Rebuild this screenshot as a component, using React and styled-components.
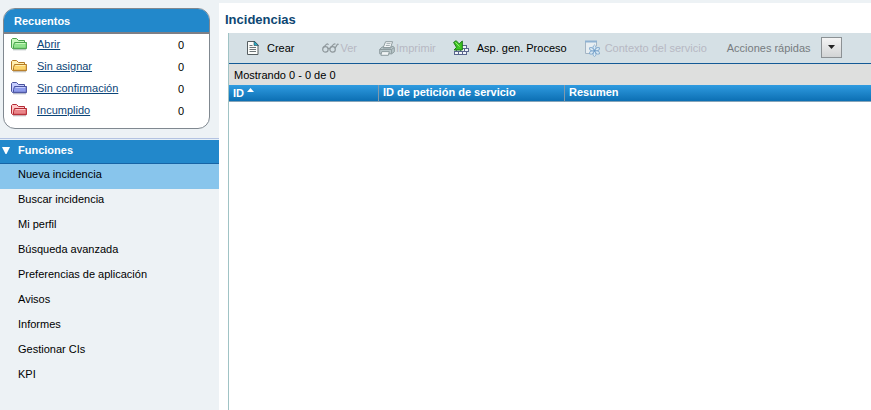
import React from "react";
import styled, { createGlobalStyle } from "styled-components";

const GlobalStyle = createGlobalStyle`
  * { box-sizing: border-box; }
  body {
    margin: 0;
    background: #fff;
    color: #000;
    font: 11px/16px "Liberation Sans", Arial, sans-serif;
  }
  button, select { font: inherit; color: inherit; }
`;

const Page = styled.div`
  display: flex;
  min-height: 100vh;
  border-top: 3px solid #edf2f5;
`;

const Sidebar = styled.aside`
  flex: 0 0 219px;
  background: #edf2f5;
`;

const CountsPanel = styled.section`
  margin: 5px 9px 0 3px;
  height: 121px;
  border: 1px solid #808890;
  border-radius: 12px;
  background: #fff;
  overflow: hidden;
`;

const PanelTitle = styled.h2`
  margin: 0;
  height: 25px;
  padding: 1px 10px 0;
  border-bottom: 2px solid #7d7f86;
  background: #2288cb;
  color: #fff;
  font-size: 11px;
  line-height: 23px;
`;

const CountList = styled.ul`
  margin: 0;
  padding: 0;
  list-style: none;
`;

const CountRow = styled.li`
  display: grid;
  grid-template-columns: 26px 1fr 31px;
  align-items: center;
  height: 22px;
  padding: 0 0 2px 7px;
`;

const CountLink = styled.a`
  color: #0b4578;
  text-decoration: underline;
  text-underline-offset: 1px;
`;

const CountValue = styled.span`
  padding-top: 2px;
`;

const Functions = styled.nav`
  margin-top: 9px;
  border-top: 1px solid #b4c3e2;
`;

const FunctionsToggle = styled.button`
  display: flex;
  align-items: center;
  width: 100%;
  height: 25px;
  margin: 0;
  padding: 0 0 3px;
  border: 0;
  border-top: 1px solid #e6f0f8;
  border-bottom: 1px solid #1664a5;
  background: #2288cb;
  color: #fff;
  font-weight: bold;
`;

const ToggleArrow = styled.svg`
  width: 8px;
  height: 8px;
  margin: 0 8px 0 2px;
`;

const FunctionLink = styled.a`
  display: block;
  height: 25px;
  padding: 2px 18px;
  background: ${(p) => (p.$active ? "#88c5ec" : "transparent")};
  color: #000;
  text-decoration: none;
`;

const Main = styled.main`
  flex: 1;
  min-width: 0;
  display: flex;
  flex-direction: column;
  padding-left: 6px;
`;

const Title = styled.h1`
  margin: 0;
  height: 30px;
  padding-top: 2px;
  color: #0d4672;
  font-size: 13px;
  line-height: 30px;
`;

const Content = styled.section`
  flex: 1;
  margin-left: 3px;
  border-left: 1px solid #a0c3c5;
`;

const Toolbar = styled.div`
  display: flex;
  align-items: center;
  height: 31px;
  padding-left: 18px;
  border-bottom: 1px solid #145a96;
  background: #d5e0e5;
  white-space: nowrap;
`;

const ToolButton = styled.button`
  display: flex;
  align-items: center;
  flex: none;
  gap: ${(p) => p.$gap}px;
  margin: 0 ${(p) => p.$after}px 0 0;
  padding: 0;
  border: 0;
  background: none;
  color: #000;
  &:disabled { color: #b7b8c3; }
`;

const QuickLabel = styled.label`
  color: #777c80;
`;

const QuickWrap = styled.span`
  display: grid;
  flex: none;
  width: 21px;
  height: 21px;
  margin: 0 0 2px 10px;
  border: 1px solid #8c9194;
  background: linear-gradient(#f4f4f4, #d2d4d5);
`;

const QuickSelect = styled.select`
  grid-area: 1 / 1;
  width: 100%;
  height: 100%;
  padding: 0;
  border: 0;
  appearance: none;
  background: none;
  color: transparent;
`;

const QuickArrow = styled.svg`
  grid-area: 1 / 1;
  place-self: center;
  width: 7px;
  height: 4px;
  pointer-events: none;
`;

const Status = styled.div`
  height: 21px;
  padding: 3px 5px;
  background: #dedfde;
`;

const Table = styled.table`
  width: 100%;
  table-layout: fixed;
  border-collapse: separate;
  border-spacing: 0;
`;

const HeadCell = styled.th`
  width: ${(p) => (p.$width ? p.$width + "px" : "auto")};
  height: 17px;
  padding: ${(p) => (p.$sorted ? "1px 4px 0" : "0 4px 1px")};
  border-left: ${(p) => (p.$sorted ? "0" : "1px solid #8299ab")};
  border-bottom: 1px solid #86a4b8;
  background: linear-gradient(#2f9be0, #0c6fb3);
  color: #fff;
  font-size: 11px;
  line-height: 15px;
  text-align: left;
  white-space: nowrap;
`;

const SortArrow = styled.svg`
  width: 7px;
  height: 4px;
  margin-left: 3px;
  vertical-align: 5px;
`;

function Folder({ light, fill, line }) {
  return (
    <svg width="16" height="14" viewBox="0 0 16 14" aria-hidden="true">
      <path d="M2 12.8h13" stroke="#b8bec2" />
      <path d="M.5 10.5v-8l1-1h4l2 2h6v2h1.8v6.2H2z" fill={light} stroke={line} strokeLinejoin="round" />
      <path d="M3.5 5.5h11.8v5.8H2.5V8.5z" fill={fill} stroke={line} strokeLinejoin="round" />
      <path d="M4.5 6.5h9.8" stroke={light} />
    </svg>
  );
}

function DocumentIcon() {
  return (
    <svg width="12" height="14" viewBox="0 0 12 14" aria-hidden="true">
      <path d="M.5.5h7.2l3.3 3.3v9.7H.5z" fill="#fbfcfa" stroke="#565e60" />
      <path d="M7 0v4.5h4.5z" fill="#27acc7" stroke="#33484f" strokeWidth=".6" />
      <path d="M2.5 4.5h3M2.5 6.5h6.5M2.5 8.5h6.5M2.5 10.5h6.5" stroke="#6e7678" />
    </svg>
  );
}

function GlassesIcon() {
  return (
    <svg width="17" height="12" viewBox="0 0 17 12" fill="none" stroke="#8f989c" strokeWidth="1.2" aria-hidden="true">
      <circle cx="3.4" cy="7.4" r="2.7" />
      <circle cx="10.6" cy="7.4" r="2.7" />
      <path d="M1.2 5.6 4.6 2.2q1.3-.8 1.9.6M6 6.8q1-.9 2 0M8.4 5.6l3.4-3.4q1-.6 1.6.2M13 6.2l2.2-3.6q.6-.9 1.4 0" />
    </svg>
  );
}

function PrinterIcon() {
  return (
    <svg width="16" height="15" viewBox="0 0 16 15" stroke="#8e9c9f" strokeLinejoin="round" aria-hidden="true">
      <path d="M4.2 6.5 6.6.7h7L11.6 6.5z" fill="#f3f6f7" />
      <path d="M7.5 2.6h4M6.8 4.5h4" strokeWidth=".8" />
      <path d="M.7 8.3 3.2 6h1.2l-.3 1h7.7l.9-1.6h1.6l1 1.2v4.2l-2.6 2H.7z" fill="#b9c7ca" />
      <path d="M.7 8.5h11.8l2.6-1.9M12.6 8.5v4.2" fill="none" />
      <path d="M2.8 10.6h7.5l-.9 3.7H1.9z" fill="#f1f4f5" />
    </svg>
  );
}

function ProcessIcon() {
  return (
    <svg width="16" height="16" viewBox="0 0 16 16" aria-hidden="true">
      <g fill="#f2f5fa" stroke="#59658d" shapeRendering="crispEdges">
        <path d="M8.5 5.5h5v3h-5z" />
        <path d="M7.5 8.5h4v3h-4zM11.5 8.5h4v3h-4zM3.5 8.5h4v3h-4z" />
        <path d="M1.5 11.5h4v3h-4zM5.5 11.5h4v3h-4zM9.5 11.5h4v3h-4z" />
      </g>
      <path d="M.6 2.4 3.2.7l3 3.2L9.3 1v9H1.2l2.3-2.7z" fill="#3dc723" stroke="#1c7b16" strokeLinejoin="round" />
      <path d="m2.4 2.3 4.2 4.3" stroke="#9cef76" />
    </svg>
  );
}

function ServiceIcon() {
  return (
    <svg width="16" height="17" viewBox="0 0 16 17" fill="none" aria-hidden="true">
      <path d="M4 13.5H.5V1.5h11V6" fill="#e7eef2" stroke="#a4b5c4" />
      <path d="M0 1.5h12" stroke="#8fb2d2" strokeWidth="2" />
      <g stroke="#80a8cd" strokeWidth=".9" fill="#d9e9f4">
        <path d="M9.5 10.8q-3-4 0-5.8 3 1.8 0 5.8q-3 4 0 5.8 3-1.8 0-5.8" />
        <path d="M9.5 10.8q-3-4 0-5.8 3 1.8 0 5.8q-3 4 0 5.8 3-1.8 0-5.8" transform="rotate(60 9.5 10.8)" />
        <path d="M9.5 10.8q-3-4 0-5.8 3 1.8 0 5.8q-3 4 0 5.8 3-1.8 0-5.8" transform="rotate(-60 9.5 10.8)" />
      </g>
      <circle cx="9.5" cy="10.8" r="1" fill="#6b9ac5" />
    </svg>
  );
}

const counts = [
  { label: "Abrir", light: "#c8f8bd", fill: "#91e38c", line: "#4aa34d" },
  { label: "Sin asignar", light: "#fff0b0", fill: "#fcd56c", line: "#b57a25" },
  { label: "Sin confirmación", light: "#c5cdff", fill: "#8e9cec", line: "#4a539f" },
  { label: "Incumplido", light: "#ffc9c9", fill: "#ea8589", line: "#b42a34" },
];

const functions = [
  "Nueva incidencia",
  "Buscar incidencia",
  "Mi perfil",
  "Búsqueda avanzada",
  "Preferencias de aplicación",
  "Avisos",
  "Informes",
  "Gestionar CIs",
  "KPI",
];

export default function App() {
  return (
    <>
      <GlobalStyle />
      <Page>
        <Sidebar>
          <CountsPanel>
            <PanelTitle>Recuentos</PanelTitle>
            <CountList>
              {counts.map(({ label, ...colors }) => (
                <CountRow key={label}>
                  <Folder {...colors} />
                  <span><CountLink href="#">{label}</CountLink></span>
                  <CountValue>0</CountValue>
                </CountRow>
              ))}
            </CountList>
          </CountsPanel>
          <Functions>
            <FunctionsToggle aria-expanded="true">
              <ToggleArrow viewBox="0 0 8 8" aria-hidden="true">
                <path d="M0 1h8L4.5 8h-1z" fill="#fff" />
              </ToggleArrow>
              Funciones
            </FunctionsToggle>
            {functions.map((name, i) => (
              <FunctionLink href="#" key={name} $active={i === 0}>{name}</FunctionLink>
            ))}
          </Functions>
        </Sidebar>
        <Main>
          <Title>Incidencias</Title>
          <Content>
            <Toolbar>
              <ToolButton $gap={8} $after={27}><DocumentIcon />Crear</ToolButton>
              <ToolButton $gap={2} $after={22} disabled><GlassesIcon />Ver</ToolButton>
              <ToolButton $gap={1} $after={17} disabled><PrinterIcon />Imprimir</ToolButton>
              <ToolButton $gap={8} $after={18}><ProcessIcon />Asp. gen. Proceso</ToolButton>
              <ToolButton $gap={4} $after={20} disabled><ServiceIcon />Contexto del servicio</ToolButton>
              <QuickLabel htmlFor="quick">Acciones rápidas</QuickLabel>
              <QuickWrap>
                <QuickSelect id="quick" />
                <QuickArrow viewBox="0 0 7 4" aria-hidden="true">
                  <path d="M0 0h7L3.5 4z" fill="#222" />
                </QuickArrow>
              </QuickWrap>
            </Toolbar>
            <Status>Mostrando 0 - 0 de 0</Status>
            <Table>
              <thead>
                <tr>
                  <HeadCell $width={149} $sorted aria-sort="ascending">
                    ID
                    <SortArrow viewBox="0 0 7 4" aria-hidden="true">
                      <path d="M0 4h7L3.5 0z" fill="#fff" />
                    </SortArrow>
                  </HeadCell>
                  <HeadCell $width={186}>ID de petición de servicio</HeadCell>
                  <HeadCell>Resumen</HeadCell>
                </tr>
              </thead>
            </Table>
          </Content>
        </Main>
      </Page>
    </>
  );
}
